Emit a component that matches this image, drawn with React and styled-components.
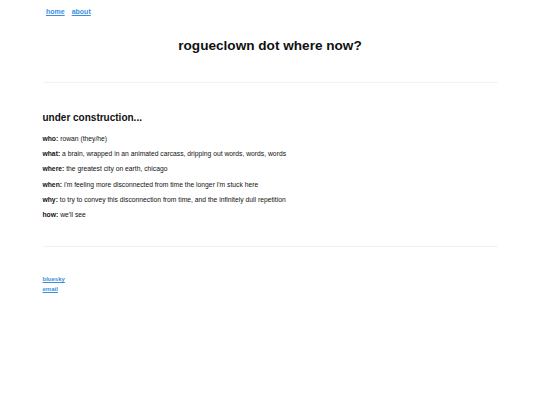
import React from "react";
import styled, { createGlobalStyle } from "styled-components";

const Global = createGlobalStyle`
  html, body { margin: 0; padding: 0; background: #ffffff; }
  body { font-family: "Liberation Sans", Arial, sans-serif; color: #111; }
`;

const Page = styled.div`
  display: flex;
  flex-direction: column;
  align-items: center;
`;

const Nav = styled.nav`
  align-self: stretch;
  display: flex;
  gap: 7px;
  padding: 8px 0 0 46px;
  height: 10px;
`;

const NavLink = styled.a`
  font-size: 7px;
  font-weight: bold;
  color: #3b8fe0;
  text-decoration: underline;
`;

const Title = styled.h1`
  margin: 20px 0 0;
  font-size: 13.6px;
  line-height: 16px;
  font-weight: bold;
  color: #111;
`;

const Main = styled.main`
  width: 455px;
  display: flex;
  flex-direction: column;
`;

const Rule = styled.hr`
  width: 100%;
  margin: ${(p) => p.$top}px 0 0;
  border: none;
  border-top: 1px solid #f2f2f2;
  height: 0;
`;

const Heading = styled.h2`
  margin: 28px 0 0;
  font-size: 10px;
  line-height: 14px;
  font-weight: bold;
`;

const List = styled.div`
  margin-top: 6px;
  display: flex;
  flex-direction: column;
`;

const Row = styled.p`
  margin: 0;
  font-size: 6.75px;
  line-height: 15.2px;
  color: #111;
  b { font-weight: bold; }
`;

const Links = styled.div`
  margin-top: 27px;
  display: flex;
  flex-direction: column;
`;

const SmallLink = styled.a`
  font-size: 6px;
  line-height: 10px;
  font-weight: bold;
  color: #3b8fe0;
  text-decoration: underline;
  align-self: flex-start;
`;

const rows = [
  ["who:", "rowan (they/he)"],
  ["what:", "a brain, wrapped in an animated carcass, dripping out words, words, words"],
  ["where:", "the greatest city on earth, chicago"],
  ["when:", "i'm feeling more disconnected from time the longer i'm stuck here"],
  ["why:", "to try to convey this disconnection from time, and the infinitely dull repetition"],
  ["how:", "we'll see"],
];

export default function App() {
  return (
    <>
      <Global />
      <Page>
        <Nav>
          <NavLink href="#">home</NavLink>
          <NavLink href="#">about</NavLink>
        </Nav>
        <Title>rogueclown dot where now?</Title>
        <Main>
          <Rule $top={28} />
          <Heading>under construction...</Heading>
          <List>
            {rows.map(([k, v]) => (
              <Row key={k}>
                <b>{k}</b> {v}
              </Row>
            ))}
          </List>
          <Rule $top={24} />
          <Links>
            <SmallLink href="#">bluesky</SmallLink>
            <SmallLink href="#">email</SmallLink>
          </Links>
        </Main>
      </Page>
    </>
  );
}
